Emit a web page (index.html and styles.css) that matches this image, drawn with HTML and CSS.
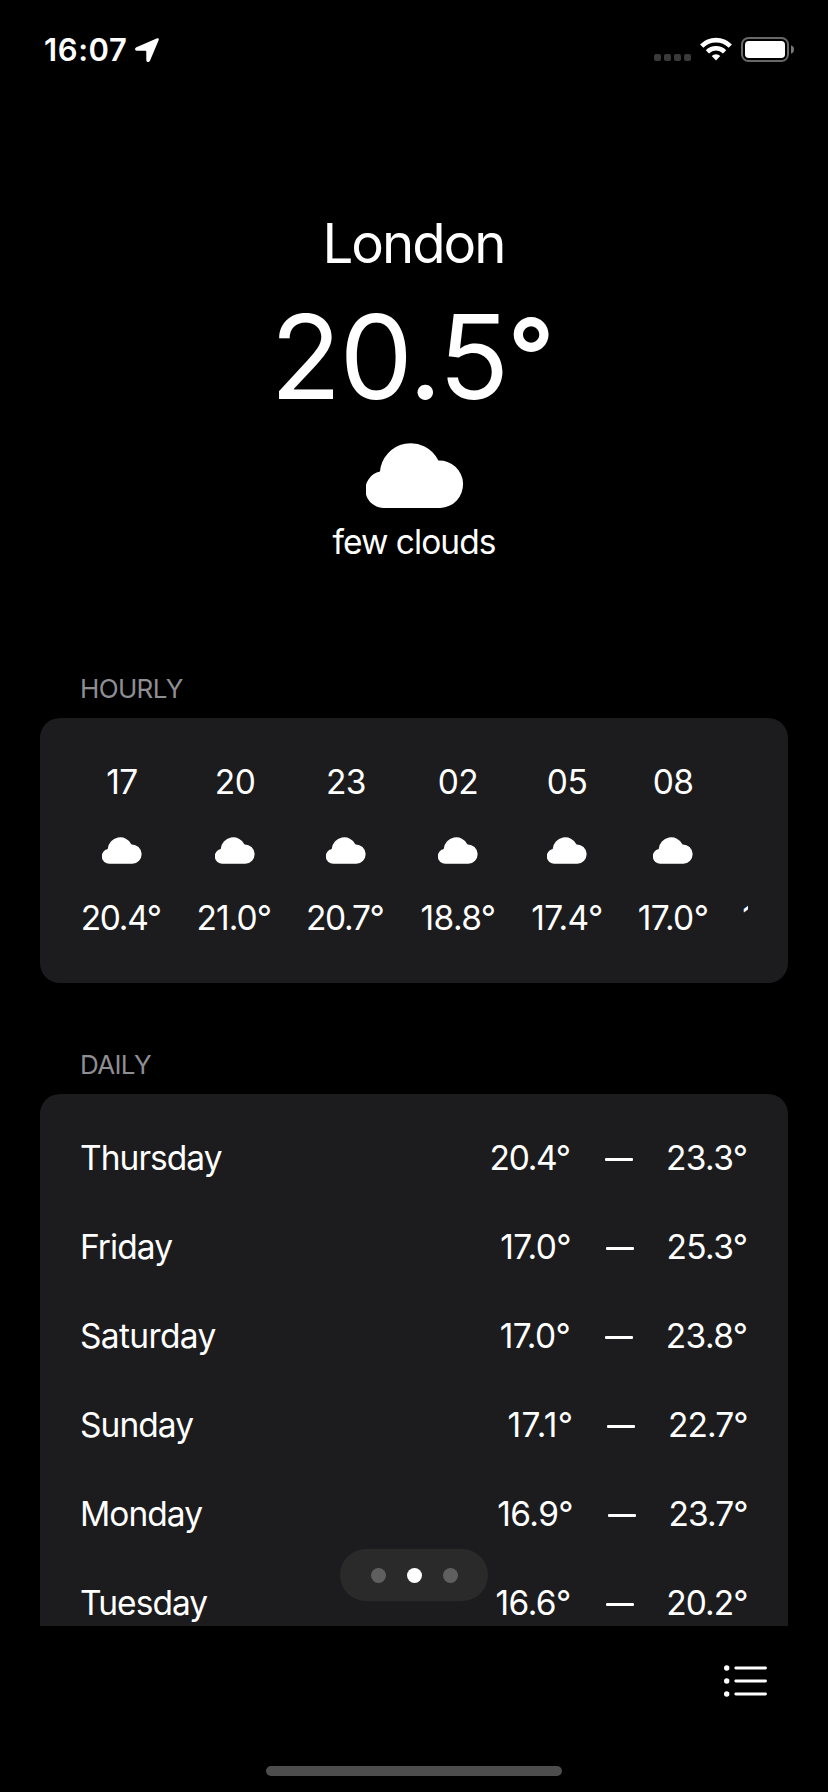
FILE: index.html
```
<!DOCTYPE html>
<html lang="en">
<head>
<meta charset="utf-8">
<title>Weather</title>
<link rel="stylesheet" href="styles.css">
</head>
<body>
<svg class="defs" aria-hidden="true">
  <symbol id="cloud" viewBox="0 0 98 65"><path d="M18.4 65A18.4 18.4 0 0 1 14 28.6A30.8 30.8 0 0 1 72.4 17.6A23.7 23.7 0 1 1 74.3 65Z"/></symbol>
</svg>
<div class="screen">
  <header class="status">
    <span class="time">16:07</span>
    <svg class="arrow" viewBox="0 0 24 24"><path d="M22.2.3Q24.3-.2 23.7 2L15 22.8Q13.8 24.6 12.4 23.9Q11.3 23.4 11.3 22V13.6Q11.3 12.7 10.4 12.7H2Q.5 12.7.1 11.4Q-.2 10 1.4 9.2Z"/></svg>
    <div class="signal"><i></i><i></i><i></i><i></i></div>
    <svg class="wifi" viewBox="0 0 32 24"><g fill="none" stroke="#fff" stroke-width="4.6"><path d="M1.7 9.1A20.2 20.2 0 0 1 30.3 9.1"/><path d="M7.4 14.8A12.2 12.2 0 0 1 24.6 14.8"/></g><path d="M11.7 19.1A6.1 6.1 0 0 1 20.3 19.1L16 23.6Z"/></svg>
    <svg class="battery" viewBox="0 0 54 25"><rect x="1" y="1" width="46" height="23" rx="6.5" fill="none" stroke="#686868" stroke-width="2"/><rect x="4" y="4" width="40" height="17" rx="3.8"/><path d="M50 8.3Q53 9.3 53 12.5T50 16.7Z" fill="#777"/></svg>
  </header>
  <main class="content">
    <section class="current">
      <h1 class="city">London</h1>
      <div class="now">20.5<span class="degree">°</span></div>
      <svg class="cloud-lg"><use href="#cloud"/></svg>
      <div class="summary">few clouds</div>
    </section>
    <h2 class="label">HOURLY</h2>
    <section class="card hourly">
      <div class="track">
        <div class="hour w84"><span>17</span><svg><use href="#cloud"/></svg><span class="tight">20.4°</span></div>
        <div class="hour w78"><span>20</span><svg><use href="#cloud"/></svg><span class="snug">21.0°</span></div>
        <div class="hour w80"><span>23</span><svg><use href="#cloud"/></svg><span class="tight">20.7°</span></div>
        <div class="hour w80"><span>02</span><svg><use href="#cloud"/></svg><span>18.8°</span></div>
        <div class="hour w74"><span>05</span><svg><use href="#cloud"/></svg><span>17.4°</span></div>
        <div class="hour w74"><span>08</span><svg><use href="#cloud"/></svg><span>17.0°</span></div>
        <div class="hour next"><span>18.6°</span></div>
      </div>
    </section>
    <h2 class="label">DAILY</h2>
    <section class="card daily">
      <div class="day"><span class="name">Thursday</span><span class="temp tight">20.4°</span><i class="dash"></i><span class="temp">23.3°</span></div>
      <div class="day"><span class="name">Friday</span><span class="temp">17.0°</span><i class="dash"></i><span class="temp">25.3°</span></div>
      <div class="day"><span class="name wide">Saturday</span><span class="temp">17.0°</span><i class="dash"></i><span class="temp">23.8°</span></div>
      <div class="day"><span class="name">Sunday</span><span class="temp loose">17.1°</span><i class="dash"></i><span class="temp snug">22.7°</span></div>
      <div class="day"><span class="name">Monday</span><span class="temp">16.9°</span><i class="dash"></i><span class="temp snug">23.7°</span></div>
      <div class="day"><span class="name">Tuesday</span><span class="temp">16.6°</span><i class="dash"></i><span class="temp snug">20.2°</span></div>
    </section>
    <nav class="pager"><i></i><i class="active"></i><i></i></nav>
  </main>
  <footer class="toolbar">
    <svg class="list" viewBox="0 0 44 32"><g><circle cx="2.7" cy="3" r="2.7"/><circle cx="2.7" cy="16" r="2.7"/><circle cx="2.7" cy="29" r="2.7"/></g><path d="M11.8 3H41.5M11.8 16H41.5M11.8 29H41.5" stroke="#fff" stroke-width="2.9" stroke-linecap="round"/></svg>
    <div class="home"></div>
  </footer>
</div>
</body>
</html>
```
FILE: styles.css
```
* { box-sizing: border-box; }
body { margin: 0; background: #000; }
.defs { display: block; width: 0; height: 0; }
.screen {
  width: 828px; height: 1792px; overflow: hidden;
  display: flex; flex-direction: column;
  background: #000; color: #fff; fill: #fff;
  font: 400 33.5px/40px Inter, sans-serif;
}
.status { height: 98px; flex: none; display: flex; align-items: flex-start; padding: 37px 34px 0 44px; }
.time { width: 91px; font-size: 31px; line-height: 26px; font-weight: 600; letter-spacing: 0.6px; white-space: nowrap; }
.arrow { width: 24px; height: 24px; margin-top: 1px; }
.signal { display: flex; gap: 3px; margin: 17px 9px 0 auto; }
.signal i { width: 7px; height: 7px; border-radius: 2px; background: #3a3a3a; }
.wifi { width: 32px; height: 24px; margin-right: 9px; }
.battery { width: 54px; height: 25px; margin-right: -1px; }
.content { position: relative; height: 1528px; flex: none; overflow: hidden; padding: 0 40px; }
.current { height: 570px; display: flex; flex-direction: column; align-items: center; padding-top: 111px; }
.city { margin: 0 1px 0 0; font-size: 54.5px; line-height: 68px; font-weight: 400; letter-spacing: -2px; }
.now { margin: 8px 5px 0 0; height: 144px; font-size: 116.5px; line-height: 144px; letter-spacing: -1.7px; white-space: nowrap; }
.degree { font-size: 102px; line-height: 1px; font-weight: 600; vertical-align: 7px; }
.cloud-lg { width: 98px; height: 65px; margin: 14px 0 14px 2px; }
.summary { line-height: 40px; letter-spacing: -0.95px; }
.label { margin: 0; padding-left: 40px; height: 50px; font-size: 26px; line-height: 42px; font-weight: 400; color: #8e8e93; letter-spacing: -0.65px; }
.card { background: #1c1c1e; border-radius: 20px; }
.hourly { height: 265px; margin-bottom: 61px; padding: 0 40px; }
.track { display: flex; gap: 32px; overflow: hidden; height: 265px; padding-top: 44px; }
.hour { flex: none; display: flex; flex-direction: column; align-items: center; white-space: nowrap; letter-spacing: -0.6px; }
.hour svg { width: 40px; height: 27px; margin: 35px 0 34px; }
.w84 { width: 84px; }
.w80 { width: 80px; }
.w78 { width: 78px; }
.w74 { width: 74px; }
.next { width: 76px; padding-top: 136px; }
.daily { height: 580px; padding: 19px 40.5px 0 40px; }
.day { height: 89px; display: flex; align-items: center; }
.name { margin-right: auto; letter-spacing: -0.95px; }
.name.wide { letter-spacing: -0.65px; }
.temp { letter-spacing: -0.6px; }
.snug { letter-spacing: -0.95px; }
.tight { letter-spacing: -1.3px; margin-right: 0.7px; }
.loose { letter-spacing: 0.4px; margin-right: -1px; }
.hour .tight, .hour .snug { margin-right: 2.5px; }
.dash { width: 28px; height: 3px; border-radius: 1px; background: #fff; margin: 3px 32.5px 0 35px; }
.pager { position: absolute; left: 340px; top: 1451px; width: 148px; height: 52px; border-radius: 26px; background: #2a2a2a; display: flex; align-items: center; justify-content: center; gap: 21px; }
.pager i { width: 15px; height: 15px; border-radius: 50%; background: #5f5f5f; }
.pager .active { background: #fff; }
.toolbar { flex: 1; display: flex; flex-direction: column; padding: 38.5px 60px 0 0; }
.list { width: 44px; height: 32px; align-self: flex-end; }
.home { width: 296px; height: 10px; margin: 69.5px 0 0 266px; border-radius: 5px; background: #4d4d4d; }
```
